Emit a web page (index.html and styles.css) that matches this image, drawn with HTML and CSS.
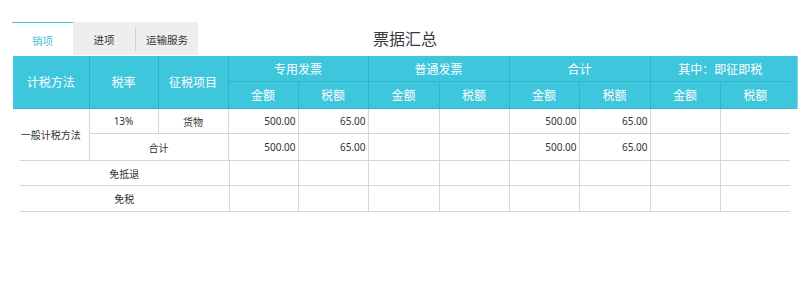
FILE: index.html
```html
<!DOCTYPE html>
<html lang="zh-CN">
<head>
<meta charset="utf-8">
<title>票据汇总</title>
<link rel="stylesheet" href="styles.css">
</head>
<body>
<div class="page">
  <div class="top">
    <div class="tabs">
      <div class="tab active">销项</div>
      <div class="tab-group">
        <div class="tab">进项</div>
        <div class="sep"></div>
        <div class="tab">运输服务</div>
      </div>
    </div>
    <h1 class="title">票据汇总</h1>
    <div></div>
  </div>

  <table class="head">
    <colgroup>
      <col class="c76"><col class="c69"><col class="c70"><col class="c70"><col class="c70"><col class="c71"><col class="c70"><col class="c70"><col class="c71"><col class="c70"><col class="c70"><col class="c7">
    </colgroup>
    <tr class="h1">
      <th rowspan="2">计税方法</th>
      <th rowspan="2">税率</th>
      <th rowspan="2">征税项目</th>
      <th colspan="2">专用发票</th>
      <th colspan="2">普通发票</th>
      <th colspan="2">合计</th>
      <th colspan="2" class="last">其中：即征即税</th>
      <th rowspan="2" class="gutter"></th>
    </tr>
    <tr class="h2">
      <th>金额</th><th>税额</th>
      <th>金额</th><th>税额</th>
      <th>金额</th><th>税额</th>
      <th>金额</th><th class="last">税额</th>
    </tr>
  </table>

  <table class="body upper">
    <colgroup>
      <col class="c76"><col class="c69"><col class="c70"><col class="c70"><col class="c70"><col class="c71"><col class="c70"><col class="c70"><col class="c71"><col class="c70"><col class="c70">
    </colgroup>
    <tr class="r1">
      <td rowspan="2" class="ctr">一般计税方法</td>
      <td class="ctr">13%</td>
      <td class="ctr">货物</td>
      <td class="num">500.00</td>
      <td class="num">65.00</td>
      <td></td><td></td>
      <td class="num">500.00</td>
      <td class="num">65.00</td>
      <td></td><td class="last"></td>
    </tr>
    <tr class="r2">
      <td colspan="2" class="ctr">合计</td>
      <td class="num">500.00</td>
      <td class="num">65.00</td>
      <td></td><td></td>
      <td class="num">500.00</td>
      <td class="num">65.00</td>
      <td></td><td class="last"></td>
    </tr>
  </table>

  <table class="body lower">
    <colgroup>
      <col class="c209"><col class="c69"><col class="c70"><col class="c71"><col class="c70"><col class="c70"><col class="c71"><col class="c70"><col class="c70">
    </colgroup>
    <tr class="r1">
      <td class="ctr">免抵退</td>
      <td></td><td></td><td></td><td></td><td></td><td></td><td></td><td class="last"></td>
    </tr>
    <tr class="r2">
      <td class="ctr">免税</td>
      <td></td><td></td><td></td><td></td><td></td><td></td><td></td><td class="last"></td>
    </tr>
  </table>
</div>
</body>
</html>
```

FILE: styles.css
```css
html, body {
  margin: 0;
  padding: 0;
  background: #fff;
}

body {
  font-family: "Noto Sans", "Noto Sans CJK SC", sans-serif;
  color: #333;
}

.page {
  width: 784px;
  padding: 22px 3px 0 13px;
}

.top {
  display: grid;
  grid-template-columns: 1fr auto 1fr;
  height: 33px;
  margin-bottom: 1px;
}

.tabs {
  display: flex;
  margin-left: -1px;
}

.tab {
  width: 61px;
  display: flex;
  align-items: center;
  justify-content: center;
  padding-top: 2px;
  font-size: 10.5px;
  color: #333;
}

.tab.active {
  box-sizing: border-box;
  border-top: 1px solid #45c3da;
  color: #4bbfd6;
  background: #fff;
}

.tab-group {
  display: flex;
  align-items: stretch;
  background: #eeeeee;
}

.tab-group .tab {
  width: 62px;
}

.sep {
  width: 1px;
  background: #cfcfcf;
  margin: 6px 0 4px;
}

.title {
  margin: 0;
  align-self: center;
  font-size: 16px;
  font-weight: normal;
  color: #3a3a3a;
  line-height: 1;
  padding-top: 1px;
}

table {
  border-collapse: collapse;
  table-layout: fixed;
}

.c7 { width: 7px; }
.c69 { width: 69px; }
.c70 { width: 70px; }
.c71 { width: 71px; }
.c76 { width: 76px; }
.c209 { width: 209px; }

.head {
  width: 784px;
  background: #3ec6dc;
  color: #fff;
  font-size: 12px;
}

.head th {
  font-weight: normal;
  padding: 0;
  border-right: 1px solid #2fb5cb;
  border-bottom: 1px solid #2fb5cb;
  text-align: center;
}

.head .h1 th {
  height: 25px;
}

.head .h2 th {
  height: 26px;
}

.head th.last {
  border-right: none;
}

.head th.gutter {
  border: none;
  border-right: 1px solid #7dd8e7;
}

.body {
  font-size: 10px;
  color: #333;
}

.body td {
  padding: 0 2px 0 0;
  border-right: 1px solid #d6d6d6;
}

.body td.last {
  border-right: none;
}

.body .ctr {
  text-align: center;
  padding: 0;
}

.body .num {
  text-align: right;
}

.upper {
  width: 777px;
}

.upper .r1 td {
  height: 24px;
  border-bottom: 1px solid #d6d6d6;
}

.upper .r1 td[rowspan] {
  border-bottom: none;
}

.upper .r2 td {
  height: 26px;
}

.lower {
  width: 770px;
  margin-left: 7px;
}

.lower tr td {
  border-bottom: 1px solid #d6d6d6;
}

.lower .r1 td {
  border-top: 1px solid #d6d6d6;
  height: 24px;
}

.lower .r2 td {
  height: 25px;
}
```
